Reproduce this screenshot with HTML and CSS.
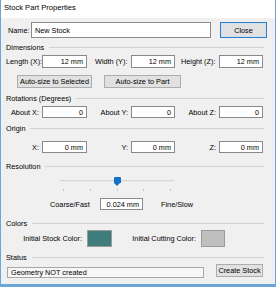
FILE: index.html
```html
<!DOCTYPE html>
<html lang="en">
<head>
    <meta charset="UTF-8">
    <title>Stock Part Properties</title>
    <link rel="stylesheet" href="styles.css">
</head>
<body>
<div class="window">
    <div class="titlebar">Stock Part Properties</div>

    <div class="row name-row">
        <span class="lbl name-lbl">Name:</span>
        <div class="field name-field">New Stock</div>
        <button class="btn close-btn">Close</button>
    </div>

    <div class="group">Dimensions</div>
    <div class="row dims-row">
        <span class="lbl w36 first">Length (X):</span>
        <div class="field num w45">12 mm</div>
        <span class="lbl w36 gap8">Width (Y):</span>
        <div class="field num w44">12 mm</div>
        <span class="lbl w38 gap6">Height (Z):</span>
        <div class="field num w44">12 mm</div>
    </div>
    <div class="row auto-row">
        <button class="btn auto-sel">Auto-size to Selected</button>
        <button class="btn auto-part">Auto-size to Part</button>
    </div>

    <div class="group rot">Rotations (Degrees)</div>
    <div class="row xyz-row">
        <span class="lbl right c1">About X:</span>
        <div class="field num w45">0</div>
        <span class="lbl right c2">About Y:</span>
        <div class="field num w44">0</div>
        <span class="lbl right c2">About Z:</span>
        <div class="field num w44">0</div>
    </div>

    <div class="group rot">Origin</div>
    <div class="row xyz-row origin-row">
        <span class="lbl right c1">X:</span>
        <div class="field num w45">0 mm</div>
        <span class="lbl right c2">Y:</span>
        <div class="field num w44">0 mm</div>
        <span class="lbl right c2">Z:</span>
        <div class="field num w44">0 mm</div>
    </div>

    <div class="group res">Resolution</div>
    <div class="slider">
        <div class="track"></div>
        <div class="thumb"></div>
        <div class="ticks">
            <i></i><i></i><i></i><i></i><i></i>
        </div>
    </div>
    <div class="row res-row">
        <span class="lbl coarse">Coarse/Fast</span>
        <div class="field num res-field">0.024 mm</div>
        <span class="lbl fine">Fine/Slow</span>
    </div>

    <div class="group res">Colors</div>
    <div class="row color-row">
        <span class="lbl right stock-lbl">Initial Stock Color:</span>
        <div class="swatch teal"></div>
        <span class="lbl right cut-lbl">Initial Cutting Color:</span>
        <div class="swatch grey"></div>
    </div>

    <div class="group status-grp">Status</div>
    <div class="row status-row">
        <div class="field status-field">Geometry NOT created</div>
        <button class="btn create-btn">Create Stock</button>
    </div>
</div>
</body>
</html>
```

FILE: styles.css
```css
html, body {
    margin: 0;
    padding: 0;
    background: #fff;
}
body {
    font-family: "Liberation Sans", Arial, sans-serif;
    font-size: 7.3px;
    color: #000;
}
.window {
    box-sizing: border-box;
    width: 276px;
    height: 287px;
    background: #f0f0f0;
    border: 1px solid #6aa6d8;
    border-top: none;
    border-bottom: 3px solid #6aa6d8;
}
.titlebar {
    height: 18px;
    line-height: 16px;
    background: #fff;
    padding-left: 3px;
    font-size: 7.6px;
}
.row {
    display: flex;
    align-items: center;
}
.lbl {
    white-space: nowrap;
    flex: none;
}
.right {
    text-align: right;
    padding-right: 3px;
    box-sizing: border-box;
}
.field {
    box-sizing: border-box;
    height: 100%;
    background: #fff;
    border: 1px solid #8a8a8a;
    display: flex;
    align-items: center;
    padding-left: 3px;
    flex: none;
    white-space: nowrap;
}
.num {
    justify-content: flex-end;
    padding-right: 3px;
}
.btn {
    box-sizing: border-box;
    height: 100%;
    margin: 0;
    padding: 0;
    font: inherit;
    color: #000;
    background: #e1e1e1;
    border: 1px solid #adadad;
    flex: none;
}

/* name */
.name-row {
    margin-top: 4px;
    height: 16px;
}
.name-lbl {
    margin-left: 7px;
    width: 23px;
}
.name-field {
    width: 180px;
}
.close-btn {
    width: 47px;
    margin-left: 9px;
    border: 1px solid #2f7fc6;
    box-shadow: inset 0 0 0 1px #cfe2f3;
}

/* group headers */
.group {
    margin-top: 4px;
    height: 10px;
    display: flex;
    align-items: center;
    padding-left: 5px;
    margin-right: 11px;
    white-space: nowrap;
}
.group::after {
    content: "";
    flex: 1;
    border-top: 1px solid #d2d2d2;
    margin-left: 5px;
}
.rot { margin-top: 5px; }
.res { margin-top: 8px; }
.status-grp { margin-top: 5px; }

/* dimensions */
.dims-row {
    margin-top: 3px;
    height: 13px;
}
.first { margin-left: 5px; }
.gap8 { margin-left: 8px; }
.gap6 { margin-left: 6px; }
.w36 { width: 36px; }
.w38 { width: 38px; }
.w44 { width: 44px; }
.w45 { width: 45px; }
.auto-row {
    margin-top: 7px;
    height: 13px;
}
.auto-sel {
    margin-left: 16px;
    width: 75px;
}
.auto-part {
    margin-left: 12px;
    width: 77px;
}

/* rotations / origin */
.xyz-row {
    margin-top: 3px;
    height: 12px;
}
.origin-row { margin-top: 8px; }
.c1 { width: 41px; }
.c2 { width: 44px; }

/* resolution */
.slider {
    position: relative;
    margin: 5px 0 0 59px;
    width: 114px;
    height: 16px;
}
.track {
    position: absolute;
    left: 0;
    right: 0;
    top: 4px;
    height: 1px;
    background: #d6d6d6;
    border-bottom: 1px solid #e9e9e9;
}
.thumb {
    position: absolute;
    left: 54px;
    top: 1px;
    width: 7px;
    height: 6px;
    background: #1672c8;
    border-radius: 1px 1px 0 0;
}
.thumb::after {
    content: "";
    position: absolute;
    left: 0;
    top: 6px;
    border-left: 3.5px solid transparent;
    border-right: 3.5px solid transparent;
    border-top: 3px solid #1672c8;
}
.ticks {
    position: absolute;
    left: 3px;
    right: 3px;
    top: 13px;
    display: flex;
    justify-content: space-between;
}
.ticks i {
    width: 1px;
    height: 2px;
    background: #c4c4c4;
}
.res-row {
    margin-top: 6px;
    height: 12px;
}
.coarse {
    margin-left: 49px;
    width: 50px;
}
.res-field {
    width: 43px;
}
.fine { margin-left: 18px; }

/* colors */
.color-row {
    margin-top: 2px;
    height: 17px;
}
.stock-lbl {
    width: 86px;
    padding-right: 5px;
}
.cut-lbl {
    width: 89px;
    padding-right: 5px;
}
.swatch {
    box-sizing: border-box;
    height: 100%;
    border: 1px solid #9a9a9a;
    flex: none;
}
.teal {
    width: 25px;
    background: #3f7c7c;
}
.grey {
    width: 24px;
    background: #bfbfbf;
}

/* status */
.status-row {
    margin-top: 2px;
    height: 14px;
    align-items: flex-start;
}
.status-field {
    margin-left: 6px;
    margin-top: 3px;
    width: 197px;
    height: 11px;
    background: #f7f7f7;
    border-color: #a8a8a8;
}
.create-btn {
    margin-left: 12px;
    width: 47px;
    height: 13px;
}
```
